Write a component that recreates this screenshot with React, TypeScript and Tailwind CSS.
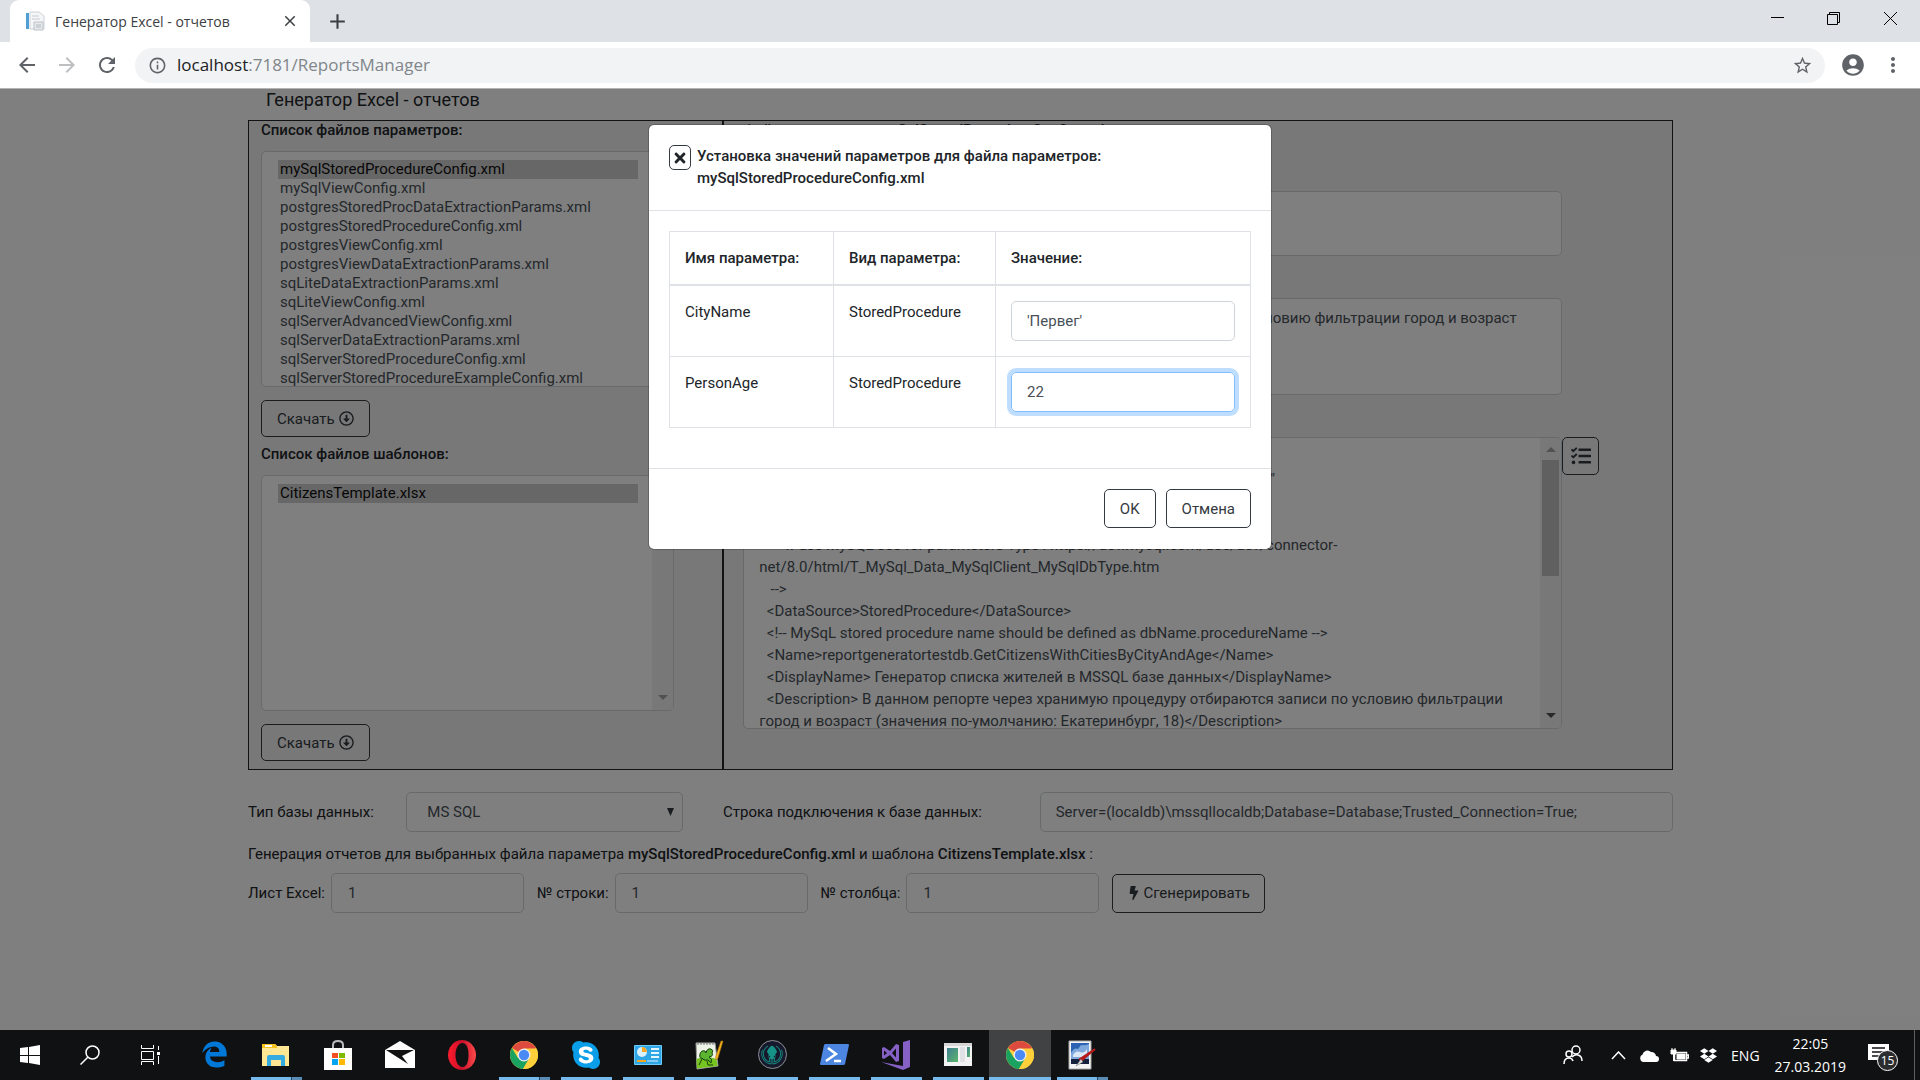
import React from "react";
import {
  MdAccountCircle,
  MdAdd,
  MdArrowBack,
  MdArrowForward,
  MdClose,
  MdInfoOutline,
  MdMoreVert,
  MdRefresh,
  MdStarBorder,
} from "react-icons/md";
import {
  FaBolt,
  FaDropbox,
  FaGitkraken,
  FaRegArrowAltCircleDown,
  FaSkype,
  FaTasks,
  FaTimes,
} from "react-icons/fa";
import { FaEdgeLegacy } from "react-icons/fa6";

const paramFiles = [
  "mySqlStoredProcedureConfig.xml",
  "mySqlViewConfig.xml",
  "postgresStoredProcDataExtractionParams.xml",
  "postgresStoredProcedureConfig.xml",
  "postgresViewConfig.xml",
  "postgresViewDataExtractionParams.xml",
  "sqLiteDataExtractionParams.xml",
  "sqLiteViewConfig.xml",
  "sqlServerAdvancedViewConfig.xml",
  "sqlServerDataExtractionParams.xml",
  "sqlServerStoredProcedureConfig.xml",
  "sqlServerStoredProcedureExampleConfig.xml",
];

const description =
  "В данном репорте через хранимую процедуру отбираются записи по условию фильтрации город и возраст (значения по-умолчанию: Екатеринбург, 18)";

const configText = `<?xml version="1.0" encoding="utf-8" ?>
<ExecutionConfig xmlns:xsi="http://www.w3.org/2001/XMLSchema-instance"
  xmlns:xsd="http://www.w3.org/2001/XMLSchema">
  <!--
       If use MySQL see for parameters Type : https://dev.mysql.com/doc/dev/connector-net/8.0/html/T_MySql_Data_MySqlClient_MySqlDbType.htm
   -->
  <DataSource>StoredProcedure</DataSource>
  <!-- MySqL stored procedure name should be defined as dbName.procedureName -->
  <Name>reportgeneratortestdb.GetCitizensWithCitiesByCityAndAge</Name>
  <DisplayName> Генератор списка жителей в MSSQL базе данных</DisplayName>
  <Description> В данном репорте через хранимую процедуру отбираются записи по условию фильтрации город и возраст (значения по-умолчанию: Екатеринбург, 18)</Description>`;

const fieldBox =
  "rounded-[5px] border border-[#ced4da] bg-white text-[15px] leading-[22px] text-[#495057] outline-none";
const outlineButton =
  "flex items-center justify-center rounded-[5px] border border-[#343a40] text-[15px] leading-[22px] text-[#343a40]";

function Scrollbar({ thumb }: { thumb?: boolean }) {
  return (
    <div aria-hidden="true" className="flex w-[21px] shrink-0 flex-col items-center bg-[#f1f1f1]">
      <svg width="10" height="22" viewBox="0 0 10 22" className="shrink-0">
        <path d="M0 14h10L5 9z" fill="#a3a3a3" />
      </svg>
      <div className="w-[17px] flex-1">{thumb && <div className="h-[116px] bg-[#c1c1c1]" />}</div>
      <svg width="10" height="20" viewBox="0 0 10 20" className="shrink-0">
        <path d="M0 5h10L5 10z" fill={thumb ? "#505050" : "#a3a3a3"} />
      </svg>
    </div>
  );
}

function FileList({ id, title, files }: { id: string; title: string; files: string[] }) {
  return (
    <section>
      <label htmlFor={id} className="block text-[15px] leading-[18px] font-medium">
        {title}
      </label>
      <div className={`${fieldBox} mt-3 mr-12 flex h-[236px] overflow-hidden`}>
        <select
          id={id}
          multiple
          defaultValue={[files[0]]}
          className="h-full min-w-0 flex-1 overflow-hidden py-2 pr-[14px] pl-4 outline-none"
        >
          {files.map((f) => (
            <option key={f} value={f} className="h-[19px] px-[2px]">
              {f}
            </option>
          ))}
        </select>
        <Scrollbar />
      </div>
      <button type="button" className={`${outlineButton} mt-[13px] h-[37px] gap-1 px-[15px]`}>
        Скачать <FaRegArrowAltCircleDown size={15} />
      </button>
    </section>
  );
}

function ParamsDialog() {
  const rows = [
    { name: "CityName", value: "'Первег'", focused: false },
    { name: "PersonAge", value: "22", focused: true },
  ];
  return (
    <div className="absolute inset-0 flex items-start justify-center bg-black/50 pt-[35px]">
      <div
        role="dialog"
        aria-modal="true"
        aria-labelledby="dialog-title"
        className="w-[624px] rounded-[6px] border border-black/20 bg-white bg-clip-padding"
      >
        <div className="flex gap-[6px] border-b border-[#dee2e6] px-5 pt-5 pb-[21px]">
          <button
            type="button"
            aria-label="Закрыть"
            className="flex h-[25px] w-[22px] items-center justify-center rounded-[5px] border border-[#343a40]"
          >
            <FaTimes size={16} />
          </button>
          <h2 id="dialog-title" className="text-[15px] leading-[22px] font-medium">
            Установка значений параметров для файла параметров:
            <br />
            mySqlStoredProcedureConfig.xml
          </h2>
        </div>
        <div className="px-5 pt-5 pb-10">
          <table className="w-full border-collapse border border-[#dee2e6] text-left text-[15px] leading-[22px]">
            <thead>
              <tr className="border-b-2 border-[#dee2e6]">
                <th className="w-[164px] border-r border-[#dee2e6] p-[15px] font-medium">Имя параметра:</th>
                <th className="w-[162px] border-r border-[#dee2e6] p-[15px] font-medium">Вид параметра:</th>
                <th className="p-[15px] font-medium">Значение:</th>
              </tr>
            </thead>
            <tbody>
              {rows.map((r) => (
                <tr key={r.name} className="border-b border-[#dee2e6] align-top">
                  <td className="border-r border-[#dee2e6] p-[15px]">{r.name}</td>
                  <td className="border-r border-[#dee2e6] p-[15px]">StoredProcedure</td>
                  <td className="p-[15px]">
                    <input
                      type="text"
                      aria-label={r.name}
                      defaultValue={r.value}
                      className={
                        r.focused
                          ? "block h-10 w-full rounded-[5px] border border-[#80bdff] px-[15px] text-[#495057] ring-4 ring-[#007bff]/25 outline-none"
                          : "block h-10 w-full rounded-[5px] border border-[#ced4da] px-[15px] text-[#495057] outline-none"
                      }
                    />
                  </td>
                </tr>
              ))}
            </tbody>
          </table>
        </div>
        <div className="flex justify-end gap-[10px] border-t border-[#dee2e6] px-5 pt-5 pb-[21px]">
          <button type="button" className={`${outlineButton} h-[39px] px-[15px]`}>
            OK
          </button>
          <button type="button" className={`${outlineButton} h-[39px] px-[15px]`}>
            Отмена
          </button>
        </div>
      </div>
    </div>
  );
}

function NumberField({ id, label }: { id: string; label: string }) {
  return (
    <div className="flex items-center gap-[6px]">
      <label htmlFor={id}>{label}</label>
      <input id={id} type="text" defaultValue="1" className={`${fieldBox} h-10 w-[193px] px-4`} />
    </div>
  );
}

function BrowserChrome() {
  return (
    <header className="font-['Open_Sans',sans-serif]">
      <div className="flex h-[42px] items-start bg-[#dee1e6]">
        <div className="mx-[10px] flex h-full w-[300px] items-center rounded-t-[9px] bg-white pr-[11px] pl-[15px]">
          <svg width="20" height="20" viewBox="0 0 20 20" aria-hidden="true">
            <path d="M5 1h9l5 4v13H5z" fill="#f4f6f8" stroke="#cdd3d8" />
            <path d="M7 5h7M7 8h8" stroke="#c6ccd1" />
            <path d="M1 2h3v16H1z" fill="#4f9fd4" />
            <path d="M9 11h9v8H9z" fill="#e6e9ec" stroke="#bcc3c9" />
            <path d="M11 14h5M11 16h5" stroke="#b0b8bf" />
          </svg>
          <span className="ml-[10px] flex-1 text-[14px] text-[#3c4043]">Генератор Excel - отчетов</span>
          <button type="button" aria-label="Закрыть вкладку" className="text-[#3c4043]">
            <MdClose size={18} />
          </button>
        </div>
        <button type="button" aria-label="Новая вкладка" className="mt-[9px] ml-[5px] text-[#3c4043]">
          <MdAdd size={25} />
        </button>
        <div className="mr-px ml-auto flex h-[37px] items-center">
          <button type="button" aria-label="Свернуть" className="flex w-[56px] justify-center">
            <svg width="13" height="13" viewBox="0 0 13 13">
              <path d="M0 5.500h13" stroke="#000" />
            </svg>
          </button>
          <button type="button" aria-label="Восстановить" className="flex w-[56px] justify-center">
            <svg width="13" height="13" viewBox="0 0 13 13" fill="none" stroke="#000">
              <path d="M.5 2.500h10v10h-10zM2.500 2.500v-2h10v10h-2" />
            </svg>
          </button>
          <button type="button" aria-label="Закрыть" className="flex w-[58px] justify-center">
            <svg width="13" height="13" viewBox="0 0 13 13" stroke="#000">
              <path d="M0 0l13 13M13 0L0 13" />
            </svg>
          </button>
        </div>
      </div>
      <div className="flex h-[47px] items-center border-b border-[#b4b4b4] bg-white px-[15px] text-[#5f6368]">
        <button type="button" aria-label="Назад">
          <MdArrowBack size={24} />
        </button>
        <button type="button" aria-label="Вперед" className="ml-4 text-[#bdbfc1]">
          <MdArrowForward size={24} />
        </button>
        <button type="button" aria-label="Обновить" className="ml-4">
          <MdRefresh size={24} />
        </button>
        <div className="ml-4 flex h-[35px] flex-1 items-center rounded-full bg-[#f1f3f4] pr-[12px] pl-[13px]">
          <MdInfoOutline size={19} />
          <div
            role="textbox"
            aria-label="Адресная строка"
            className="ml-[10px] flex-1 text-[17px] leading-6 text-[#80868b]"
          >
            <span className="text-[#202124]">localhost</span>:7181/ReportsManager
          </div>
          <button type="button" aria-label="Добавить закладку">
            <MdStarBorder size={21} />
          </button>
        </div>
        <button type="button" aria-label="Профиль" className="ml-[15px]">
          <MdAccountCircle size={26} />
        </button>
        <button type="button" aria-label="Меню" className="ml-[15px]">
          <MdMoreVert size={24} />
        </button>
      </div>
    </header>
  );
}

const ChromeIcon = () => (
  <svg width="28" height="28" viewBox="0 0 28 28">
    <circle cx="14" cy="14" r="14" fill="#fdd03c" />
    <path d="M14 14L1.900 7A14 14 0 0 1 26.100 7z" fill="#dd4b3e" />
    <path d="M1.900 7A14 14 0 0 0 13 28l6.500-11L14 14 8 17z" fill="#1aa260" />
    <path d="M14 7.500h12.300A14 14 0 0 1 13 28l6.600-11z" fill="#fdd03c" />
    <circle cx="14" cy="14" r="6.500" fill="#f1f1f1" />
    <circle cx="14" cy="14" r="5.200" fill="#4a8af4" />
  </svg>
);

const taskIcons: { name: string; icon: React.ReactNode; bar?: "full" | "split"; active?: boolean }[] = [
  { name: "Edge", icon: <FaEdgeLegacy size={27} color="#0078d7" /> },
  {
    name: "Проводник",
    bar: "split",
    icon: (
      <svg width="28" height="24" viewBox="0 0 28 24">
        <path d="M0 1h13l2 2h12v20H0z" fill="#ffe793" />
        <path d="M0 1h13l2 2v2H0z" fill="#f6c21c" />
        <path d="M3 2h7v2H3z" fill="#fff" />
        <path d="M5 23V14q0-2 2-2h14q2 0 2 2v9h-4v-6H9v6z" fill="#36abe1" />
      </svg>
    ),
  },
  {
    name: "Магазин",
    icon: (
      <svg width="30" height="30" viewBox="0 0 30 30">
        <path d="M10 9V5q0-4 5-4t5 4v4" fill="none" stroke="#bbb" strokeWidth="2" />
        <path d="M1 8h28v22H1z" fill="#fff" />
        <path d="M9 13h6v5H9z" fill="#f25022" />
        <path d="M16 13h6v5h-6z" fill="#7fba00" />
        <path d="M9 19h6v6H9z" fill="#00a4ef" />
        <path d="M16 19h6v6h-6z" fill="#ffb900" />
      </svg>
    ),
  },
  {
    name: "Почта",
    icon: (
      <svg width="30" height="27" viewBox="0 0 30 27">
        <path d="M0 9L15 0l15 9v18H0z" fill="#fff" />
        <path d="M1 9h28l-12 6 6 8L1 9z" fill="#111" />
      </svg>
    ),
  },
  {
    name: "Opera",
    icon: (
      <svg width="28" height="30" viewBox="0 0 28 30">
        <defs>
          <linearGradient id="opera" x1="0" x2="1">
            <stop offset="0" stopColor="#ff1b2d" />
            <stop offset="0.500" stopColor="#c8102a" />
            <stop offset="1" stopColor="#ff4b4b" />
          </linearGradient>
        </defs>
        <path
          fillRule="evenodd"
          fill="url(#opera)"
          d="M14 0a14 15 0 1 0 .01 0zM14.500 3c4 0 6 5 6 12s-2 12-6 12-7-5-7-12 3-12 7-12z"
        />
      </svg>
    ),
  },
  { name: "Chrome", icon: <ChromeIcon />, bar: "split" },
  {
    name: "Skype",
    bar: "full",
    icon: (
      <span className="flex h-[28px] w-[28px] items-center justify-center bg-[radial-gradient(circle,#fff_55%,transparent_56%)]">
        <FaSkype size={32} color="#0a9ee8" className="shrink-0" />
      </span>
    ),
  },
  {
    name: "Панель управления",
    bar: "full",
    icon: (
      <svg width="28" height="20" viewBox="0 0 28 20">
        <rect width="28" height="20" rx="1" fill="#6fcbf7" />
        <rect x="1" y="1" width="26" height="18" fill="#2fa6e6" />
        <circle cx="8" cy="7" r="5" fill="#d9f1fd" />
        <path d="M8 7V2a5 5 0 0 1 5 5z" fill="#f7a823" />
        <path d="M17 4h8M17 8h8M17 12h8" stroke="#e4f6ff" strokeWidth="2" />
        <path d="M3 16h9" stroke="#f7a823" strokeWidth="2" />
        <path d="M13 16h11" stroke="#d9f1fd" />
      </svg>
    ),
  },
  {
    name: "Notepad++",
    bar: "full",
    icon: (
      <svg width="30" height="30" viewBox="0 0 30 30">
        <path d="M1 3h19l3 23-21 3z" fill="#eef3e8" stroke="#999" />
        <path d="M1.500 19q10-4 20 0l1 7-20.500 2.500z" fill="#76c41f" />
        <path d="M3 2v3M6 2v3M9 2v3M12 2v3M15 2v3M18 2v3" stroke="#777" />
        <path d="M5 14q1-4 5-3l1 2q1-5 5-4 3 1 1 4 2 3-3 4 4 2 2 6l-3-3q-5 1-6-2-3 1-2-4z" fill="#5bb531" stroke="#173f0d" />
        <path d="M7 19l-3 6M12 21l1 4h5" fill="none" stroke="#173f0d" />
        <path d="M28 1l-5 17-2 2-.5-3L26 1z" fill="#f2b21b" stroke="#a96f0c" strokeWidth="0.500" />
      </svg>
    ),
  },
  {
    name: "GitKraken",
    bar: "full",
    icon: (
      <span className="flex h-[29px] w-[29px] items-center justify-center rounded-full border border-[#8d9096] bg-[#15192b]">
        <FaGitkraken size={22} color="#179287" />
      </span>
    ),
  },
  {
    name: "PowerShell",
    bar: "full",
    icon: (
      <svg width="29" height="21" viewBox="0 0 29 21">
        <path d="M5 0h23q1 0 1 1l-4 19q0 1-2 1H1q-1 0-1-1L4 1z" fill="#4c86e0" />
        <path d="M8 4l8 6-10 7M14 17h7" fill="none" stroke="#fff" strokeWidth="2.500" />
      </svg>
    ),
  },
  {
    name: "Visual Studio",
    bar: "full",
    icon: (
      <svg width="30" height="30" viewBox="0 0 30 30" fill="#8661c5">
        <path d="M22 2l7-2v27l-7 3L0 22l22 4z" />
        <path
          fillRule="evenodd"
          d="M1 8l2-1 6 4 6-7 3 1v16l-3 1-6-7-6 4-2-1zM3 10.500v5l3-2.500zM15 8.500L11 13l4 4.500z"
        />
      </svg>
    ),
  },
  {
    name: "Окно",
    bar: "full",
    icon: (
      <svg width="28" height="23" viewBox="0 0 28 23">
        <defs>
          <linearGradient id="win" x1="0" x2="1" y1="0" y2="1">
            <stop offset="0" stopColor="#3f7f94" />
            <stop offset="1" stopColor="#5bb56a" />
          </linearGradient>
        </defs>
        <path d="M0 0h28v23H0z" fill="#f3f3f3" />
        <path d="M0 0h28v3H0z" fill="#d6d6d6" />
        <path d="M3 5h11v14H3z" fill="url(#win)" />
        <path d="M16 4h5v15h-5z" fill="#dfe1e4" />
        <path d="M23 4h3v10h-3z" fill="url(#win)" />
      </svg>
    ),
  },
  { name: "Chrome (активно)", icon: <ChromeIcon />, bar: "full", active: true },
  {
    name: "Paint",
    bar: "split",
    icon: (
      <svg width="28" height="30" viewBox="0 0 28 30">
        <path d="M1 1h22v28H1z" fill="#f4f4f4" stroke="#aaa" />
        <path d="M3 3h18v17H3z" fill="#2c62b4" />
        <path d="M3 13q3-6 7-4l3-4q4 1 8-1v16H3z" fill="#7fa9dc" />
        <path d="M5 15q3-5 7-3t7-3v8H5z" fill="#dbe8f6" />
        <path d="M3 19h18v5H3z" fill="#14203c" />
        <path d="M27 9L13 21l-1-2z" stroke="#b71c1c" strokeWidth="2" />
        <path d="M13 19l-5 7 7-4z" fill="#ddd" stroke="#666" strokeWidth="0.500" />
      </svg>
    ),
  },
];

function Taskbar() {
  return (
    <footer className="flex h-[50px] shrink-0 bg-[#101113] font-['Open_Sans',sans-serif] text-white">
      <div className="mr-[3px] flex">
        <button type="button" aria-label="Пуск" className="flex w-[60px] items-center justify-center">
          <svg width="20" height="20" viewBox="0 0 20 20" fill="#fff">
            <path d="M0 3l8-1v8H0zM9 2l11-2v10H9zM0 11h8v7l-8-1zM9 11h11v9L9 18z" />
          </svg>
        </button>
        <button type="button" aria-label="Поиск" className="flex w-[60px] items-center justify-center">
          <svg width="20" height="20" viewBox="0 0 20 20" fill="none" stroke="#fff" strokeWidth="1.500">
            <circle cx="12.500" cy="7.500" r="6.500" />
            <path d="M8 12l-7.500 7.500" />
          </svg>
        </button>
        <button type="button" aria-label="Представление задач" className="flex w-[60px] items-center justify-center">
          <svg width="21" height="20" viewBox="0 0 21 20" fill="none" stroke="#fff">
            <path d="M1.500 0v3.500h12V0M1.500 6.500h12v8h-12zM1.500 20v-3.500h12V20M18.500 1v4M18.500 11v8" />
            <path d="M17 7h3v3h-3z" fill="#fff" stroke="none" />
          </svg>
        </button>
      </div>
      {taskIcons.map((t) => (
        <button
          key={t.name}
          type="button"
          aria-label={t.name}
          className={
            t.active
              ? "flex w-[62px] flex-col items-center bg-[#404244]"
              : "flex w-[62px] flex-col items-center"
          }
        >
          <span className="flex h-[47px] items-center pt-[2px]">{t.icon}</span>
          {t.bar && (
            <span className={t.active ? "flex h-[3px] w-full bg-[#76b9ed]" : "flex h-[3px] w-[51px] bg-[#76b9ed]"}>
              {t.bar === "split" && <span className="ml-auto w-[11px] border-l border-[#2a4256] bg-[#5a8db5]" />}
            </span>
          )}
        </button>
      ))}
      <div className="ml-auto flex items-center">
        <svg width="20" height="20" viewBox="0 0 20 20" fill="none" stroke="#fff" strokeWidth="1.500" className="mr-[28px]">
          <circle cx="13" cy="5" r="4" />
          <circle cx="6" cy="9" r="3" />
          <path d="M1 19q0-6 5-6 3 0 4 3M9 12q3-3 6-2 4 1 4 6" />
        </svg>
        <svg width="15" height="9" viewBox="0 0 15 9" fill="none" stroke="#fff" strokeWidth="1.500" className="mr-[13px]">
          <path d="M1 8l6.500-7L14 8" />
        </svg>
        <svg width="20" height="13" viewBox="0 0 20 13" fill="#fff" className="mr-[11px]">
          <path d="M4 13a4 4 0 0 1-.5-7.500A5 5 0 0 1 12 3a4.500 4.500 0 0 1 5 4 3 3 0 0 1 0 6z" />
        </svg>
        <svg width="19" height="15" viewBox="0 0 19 15" fill="none" stroke="#fff" className="mr-[11px]">
          <path d="M4.500 4.500h12v8h-12zM17 7h1.500v3H17" strokeWidth="1.500" />
          <path d="M7 6h8v5H7z" fill="#fff" />
          <path d="M1 2h5v4H1zM2 0v2M5 0v2M3.500 6v7" fill="#fff" />
        </svg>
        <FaDropbox size={17} className="mr-[14px]" />
        <span className="mr-[15px] text-[14px]">ENG</span>
        <div className="mr-[22px] text-center text-[14px] leading-[23px]">
          22:05
          <br />
          27.03.2019
        </div>
        <div className="relative mr-[14px] h-[26px] w-[32px]">
          <svg width="21" height="20" viewBox="0 0 21 20" className="mt-[2px]">
            <path d="M0 0h21v16h-7l-4 4v-4H0z" fill="#fff" />
            <path d="M4 4h13M4 8h13M4 12h9" stroke="#101113" strokeWidth="1.500" />
          </svg>
          <span className="absolute top-[8px] left-[9px] flex h-[21px] w-[21px] items-center justify-center rounded-full border border-white bg-[#2b2d2f] text-[12px]">
            15
          </span>
        </div>
        <div className="h-[50px] w-[6px] border-l border-[#5d5e60]" />
      </div>
    </footer>
  );
}

export default function App() {
  return (
    <div className="flex min-h-screen flex-col bg-white">
      <BrowserChrome />
      <main className="relative flex-1 overflow-hidden pr-[247px] pl-[248px] font-['Roboto',sans-serif] text-[15px] leading-[22px] text-[#212529]">
        <h1 className="mb-[9px] pl-[18px] text-[18px] leading-[22px]">Генератор Excel - отчетов</h1>
        <div className="grid grid-cols-3 border border-[#212529] bg-[#f1f1f1]">
          <div className="flex flex-col gap-2 border-r border-[#212529] pb-2 pl-3">
            <FileList id="param-files" title="Список файлов параметров:" files={paramFiles} />
            <FileList id="template-files" title="Список файлов шаблонов:" files={["CitizensTemplate.xlsx"]} />
          </div>
          <div className="col-span-2 flex flex-col gap-3 border-l border-[#212529] pl-[19px]">
            <h2 className="mb-[10px] leading-[18px] font-medium">Файл параметров: mySqlStoredProcedureConfig.xml</h2>
            <label htmlFor="report-name" className="leading-[18px] font-medium">
              Имя отчета:
            </label>
            <textarea
              id="report-name"
              defaultValue="Генератор списка жителей в MSSQL базе данных"
              className={`${fieldBox} mr-[110px] h-[65px] resize-none overflow-hidden px-[15px] py-2`}
            />
            <label htmlFor="report-description" className="leading-[18px] font-medium">
              Описание:
            </label>
            <textarea
              id="report-description"
              defaultValue={description}
              className={`${fieldBox} mr-[110px] h-[97px] resize-none overflow-hidden px-[15px] py-2`}
            />
            <label htmlFor="report-config" className="leading-[18px] font-medium">
              Содержимое:
            </label>
            <div className="mr-[73px] flex items-start">
              <div className={`${fieldBox} flex h-[292px] flex-1 overflow-hidden`}>
                <textarea
                  id="report-config"
                  defaultValue={configText}
                  className="min-w-0 flex-1 resize-none overflow-hidden px-[15px] py-2 outline-none"
                />
                <Scrollbar thumb />
              </div>
              <button type="button" aria-label="Параметры" className={`${outlineButton} h-[38px] w-[37px]`}>
                <FaTasks size={20} />
              </button>
            </div>
          </div>
        </div>
        <div className="mt-[22px] grid grid-cols-9 items-center">
          <label htmlFor="db-type">Тип базы данных:</label>
          <div className="relative col-span-2 mr-10">
            <select id="db-type" className={`${fieldBox} h-10 w-full appearance-none px-5`}>
              <option>MS SQL</option>
            </select>
            <svg
              width="7"
              height="8"
              viewBox="0 0 7 8"
              className="pointer-events-none absolute top-4 right-[9px]"
              aria-hidden="true"
            >
              <path d="M0 0h7L3.500 8z" fill="#343a40" />
            </svg>
          </div>
          <label htmlFor="connection" className="col-span-2">
            Строка подключения к базе данных:
          </label>
          <input
            id="connection"
            type="text"
            defaultValue="Server=(localdb)\mssqllocaldb;Database=Database;Trusted_Connection=True;"
            className={`${fieldBox} col-span-4 h-10 px-[15px]`}
          />
        </div>
        <p className="mt-[11px] mb-2">
          Генерация отчетов для выбранных файла параметра <b className="font-medium">mySqlStoredProcedureConfig.xml</b> и
          шаблона <b className="font-medium">CitizensTemplate.xlsx</b> :
        </p>
        <div className="flex items-center gap-[13px]">
          <NumberField id="sheet" label="Лист Excel:" />
          <NumberField id="row" label="№ строки:" />
          <NumberField id="column" label="№ столбца:" />
          <button type="button" className={`${outlineButton} h-[39px] gap-[2px] px-[14px]`}>
            <FaBolt size={14} /> Сгенерировать
          </button>
        </div>
        <ParamsDialog />
      </main>
      <Taskbar />
    </div>
  );
}
